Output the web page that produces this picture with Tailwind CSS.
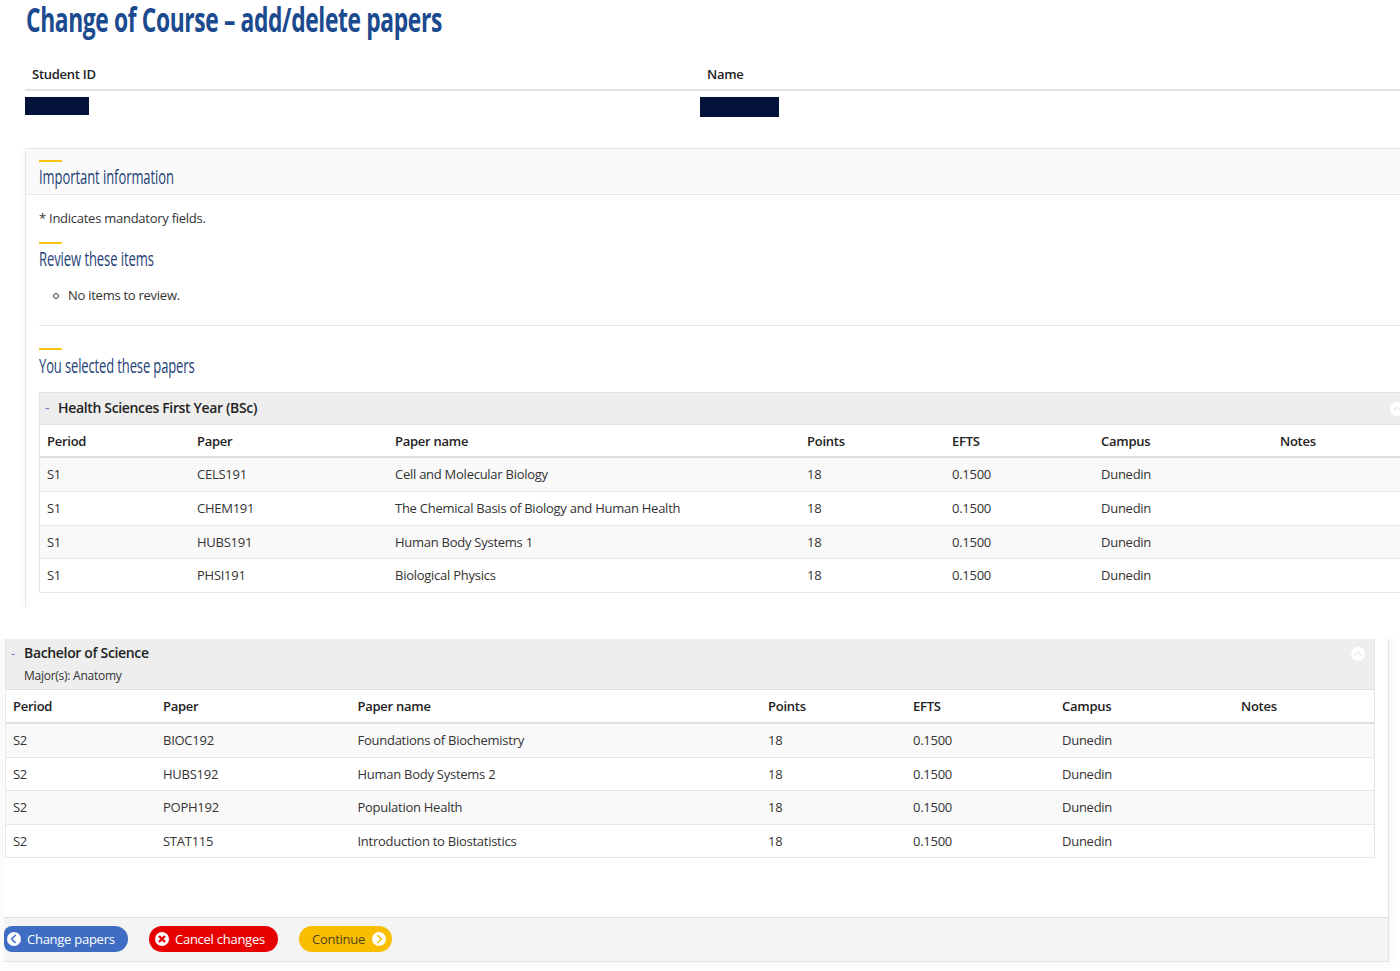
<!DOCTYPE html>
<html lang="en">
<head>
    <meta charset="UTF-8">
    <meta name="viewport" content="width=device-width, initial-scale=1">
    <title>Change of Course</title>
    <script src="https://cdn.jsdelivr.net/npm/@tailwindcss/browser@4"></script>
</head>
<body class="bg-white h-[971px] overflow-hidden text-[13px] leading-5 tracking-[-0.26px] text-[#333] font-['Open_Sans','Noto_Sans',sans-serif]">
    <header class="h-[61px] pl-[26px]">
        <h1 class="w-max origin-left scale-x-[0.671] whitespace-nowrap text-[34px] leading-[38px] font-bold tracking-[-0.55px] text-[#1b4a8f]">Change of Course – add/delete papers</h1>
    </header>

    <!-- Student details -->
    <section class="ml-[25px] h-[87px]">
        <div class="flex h-[30px] border-b-2 border-[#e2e2e2] pt-[3px] pl-[7px] font-semibold text-[#222]">
            <div class="w-[675px]">Student ID</div>
            <div>Name</div>
        </div>
        <div class="flex items-start pt-[6px]">
            <div class="w-[675px]"><div class="h-[18px] w-16 bg-[#031339]"></div></div>
            <div class="h-5 w-[79px] bg-[#031339]"></div>
        </div>
    </section>

    <main class="h-[459px] overflow-hidden pl-[25px]">
        <div class="h-[480px] rounded-tl-[3px] border-t border-l border-[#e6e6e6] shadow-[0_0_14px_rgba(0,0,0,0.04)]">
            <div class="h-[46px] border-b border-[#e6e6e6] bg-[#fafafa] pt-[11px] pl-[13px]">
                <div class="h-[2px] w-[23px] bg-[#fcc20f]"></div>
                <h2 class="mt-[3px] w-max origin-left scale-x-[0.65] whitespace-nowrap text-[20px] leading-6 tracking-[-0.1px] text-[#1f3f77]">Important information</h2>
            </div>
            <div class="pl-[13px]">
                <p class="pt-[13px]">* Indicates mandatory fields.</p>
                <div class="mt-[14px] h-[2px] w-[23px] bg-[#fcc20f]"></div>
                <h2 class="mt-[3px] w-max origin-left scale-x-[0.65] whitespace-nowrap text-[20px] leading-6 tracking-[-0.1px] text-[#1f3f77]">Review these items</h2>
                <ul class="mt-[14px] flex h-5 items-center pl-[14px]">
                    <li class="flex items-center gap-[9px]"><span class="mt-[2px] size-[6px] rounded-full border border-[#444]"></span>No items to review.</li>
                </ul>
                <hr class="mt-5 border-[#e9e9e9]">
                <div class="mt-[22px] h-[2px] w-[23px] bg-[#fcc20f]"></div>
                <h2 class="mt-1 w-max origin-left scale-x-[0.65] whitespace-nowrap text-[20px] leading-6 tracking-[-0.2px] text-[#1f3f77]">You selected these papers</h2>

                <div class="mt-[14px] border-l border-[#e6e6e6]">
                    <div class="flex h-[33px] items-center justify-between border-y border-[#e0e0e0] bg-[#eee]">
                        <div class="-mt-px flex items-center text-sm leading-5 font-semibold tracking-[-0.34px] text-[#222]"><span class="w-[18px] pl-[5px] font-normal text-[#5b7ec0]">-</span>Health Sciences First Year (BSc)</div>
                        <svg class="-mr-1 size-[14px]" viewBox="0 0 14 14"><circle cx="7" cy="7" r="7" fill="#fff"/><path d="M3.5 8.5 7 5l3.5 3.5" fill="none" stroke="#eee" stroke-width="1.8"/></svg>
                    </div>
                    <table class="w-full table-fixed border-separate border-spacing-0 text-left [&_td]:border-b [&_td]:border-[#e6e6e6] [&_td]:p-0 [&_td]:pb-px [&_td]:pl-[7px] [&_th]:border-b-2 [&_th]:border-[#e0e0e0] [&_th]:p-0 [&_th]:pl-[7px] [&_th]:font-semibold">
                        <colgroup><col class="w-[150px]"><col class="w-[198px]"><col class="w-[412px]"><col class="w-[145px]"><col class="w-[149px]"><col class="w-[179px]"><col></colgroup>
                        <thead class="text-[#222]">
                            <tr class="h-[33px]"><th>Period</th><th>Paper</th><th>Paper name</th><th>Points</th><th>EFTS</th><th>Campus</th><th>Notes</th></tr>
                        </thead>
                        <tbody>
                            <tr class="h-[34px] bg-[#f9f9f9]"><td>S1</td><td>CELS191</td><td>Cell and Molecular Biology</td><td>18</td><td>0.1500</td><td>Dunedin</td><td></td></tr>
                            <tr class="h-[34px]"><td>S1</td><td>CHEM191</td><td>The Chemical Basis of Biology and Human Health</td><td>18</td><td>0.1500</td><td>Dunedin</td><td></td></tr>
                            <tr class="h-[33px] bg-[#f9f9f9]"><td>S1</td><td>HUBS191</td><td>Human Body Systems 1</td><td>18</td><td>0.1500</td><td>Dunedin</td><td></td></tr>
                            <tr class="h-[34px]"><td>S1</td><td>PHSI191</td><td>Biological Physics</td><td>18</td><td>0.1500</td><td>Dunedin</td><td></td></tr>
                        </tbody>
                    </table>
                </div>
            </div>
        </div>
    </main>

    <section class="mt-8 h-[332px] overflow-hidden pl-1">
        <div class="-mt-5 h-[343px] w-[1385px] border-r border-b border-[#e2e2e2] pt-5 shadow-[0_0_14px_rgba(0,0,0,0.05)]">
            <div class="ml-px w-[1370px] border-x border-[#e6e6e6]">
                <div class="flex h-[51px] justify-between border-b border-[#e0e0e0] bg-[#eee] pr-[9px]">
                    <div class="flex pt-1">
                        <span class="w-[18px] pl-[5px] text-[#5b7ec0]">-</span>
                        <div>
                            <div class="text-sm leading-5 font-semibold tracking-[-0.34px] text-[#222]">Bachelor of Science</div>
                            <div class="mt-[3px] text-[12px]">Major(s): Anatomy</div>
                        </div>
                    </div>
                    <svg class="mt-2 size-[14px]" viewBox="0 0 14 14"><circle cx="7" cy="7" r="7" fill="#fff"/><path d="M3.5 8.5 7 5l3.5 3.5" fill="none" stroke="#eee" stroke-width="1.8"/></svg>
                </div>
                <table class="w-full table-fixed border-separate border-spacing-0 text-left [&_td]:border-b [&_td]:border-[#e6e6e6] [&_td]:p-0 [&_td]:pb-px [&_td]:pl-[7px] [&_th]:border-b-2 [&_th]:border-[#e0e0e0] [&_th]:p-0 [&_th]:pl-[7px] [&_th]:font-semibold">
                    <colgroup><col class="w-[150px]"><col class="w-[194.5px]"><col class="w-[410.5px]"><col class="w-[145px]"><col class="w-[149px]"><col class="w-[179px]"><col></colgroup>
                    <thead class="text-[#222]">
                        <tr class="h-[34px]"><th>Period</th><th>Paper</th><th>Paper name</th><th>Points</th><th>EFTS</th><th>Campus</th><th>Notes</th></tr>
                    </thead>
                    <tbody>
                        <tr class="h-[34px] bg-[#f9f9f9]"><td>S2</td><td>BIOC192</td><td>Foundations of Biochemistry</td><td>18</td><td>0.1500</td><td>Dunedin</td><td></td></tr>
                        <tr class="h-[33px]"><td>S2</td><td>HUBS192</td><td>Human Body Systems 2</td><td>18</td><td>0.1500</td><td>Dunedin</td><td></td></tr>
                        <tr class="h-[34px] bg-[#f9f9f9]"><td>S2</td><td>POPH192</td><td>Population Health</td><td>18</td><td>0.1500</td><td>Dunedin</td><td></td></tr>
                        <tr class="h-[33px]"><td>S2</td><td>STAT115</td><td>Introduction to Biostatistics</td><td>18</td><td>0.1500</td><td>Dunedin</td><td></td></tr>
                    </tbody>
                </table>
            </div>

            <!-- Actions -->
            <div class="mt-[59px] flex h-[44px] items-center border-t border-[#e2e2e2] bg-[#f4f4f4] pb-px">
                <button class="flex h-[26px] w-[124px] items-center gap-[6px] rounded-l-[8px] rounded-r-[13px] bg-[#3f6dc3] pl-[3px] text-white">
                    <svg class="size-[14px] shrink-0" viewBox="0 0 14 14"><circle cx="7" cy="7" r="7" fill="#fff"/><path d="M8.6 3 4.6 7l4 4" fill="none" stroke="#3f6dc3" stroke-width="1.5"/></svg>
                    <span class="whitespace-nowrap">Change papers</span>
                </button>
                <button class="ml-[21px] flex h-[26px] w-[129px] items-center gap-[6px] rounded-full bg-[#e60000] pl-[6px] text-white">
                    <svg class="size-[14px] shrink-0" viewBox="0 0 14 14"><circle cx="7" cy="7" r="7" fill="#fff"/><path d="m4 4 6 6m0-6-6 6" fill="none" stroke="#e60000" stroke-width="2.3"/></svg>
                    <span class="whitespace-nowrap">Cancel changes</span>
                </button>
                <button class="ml-[21px] flex h-[26px] w-[93px] items-center justify-between rounded-full bg-[#fabe00] pr-[6px] pl-[13px] text-[#4d431c]">
                    <span class="whitespace-nowrap">Continue</span>
                    <svg class="size-[14px] shrink-0" viewBox="0 0 14 14"><circle cx="7" cy="7" r="7" fill="#fff"/><path d="m5.4 3 4 4-4 4" fill="none" stroke="#fabe00" stroke-width="1.5"/></svg>
                </button>
            </div>
        </div>
    </section>
</body>
</html>
